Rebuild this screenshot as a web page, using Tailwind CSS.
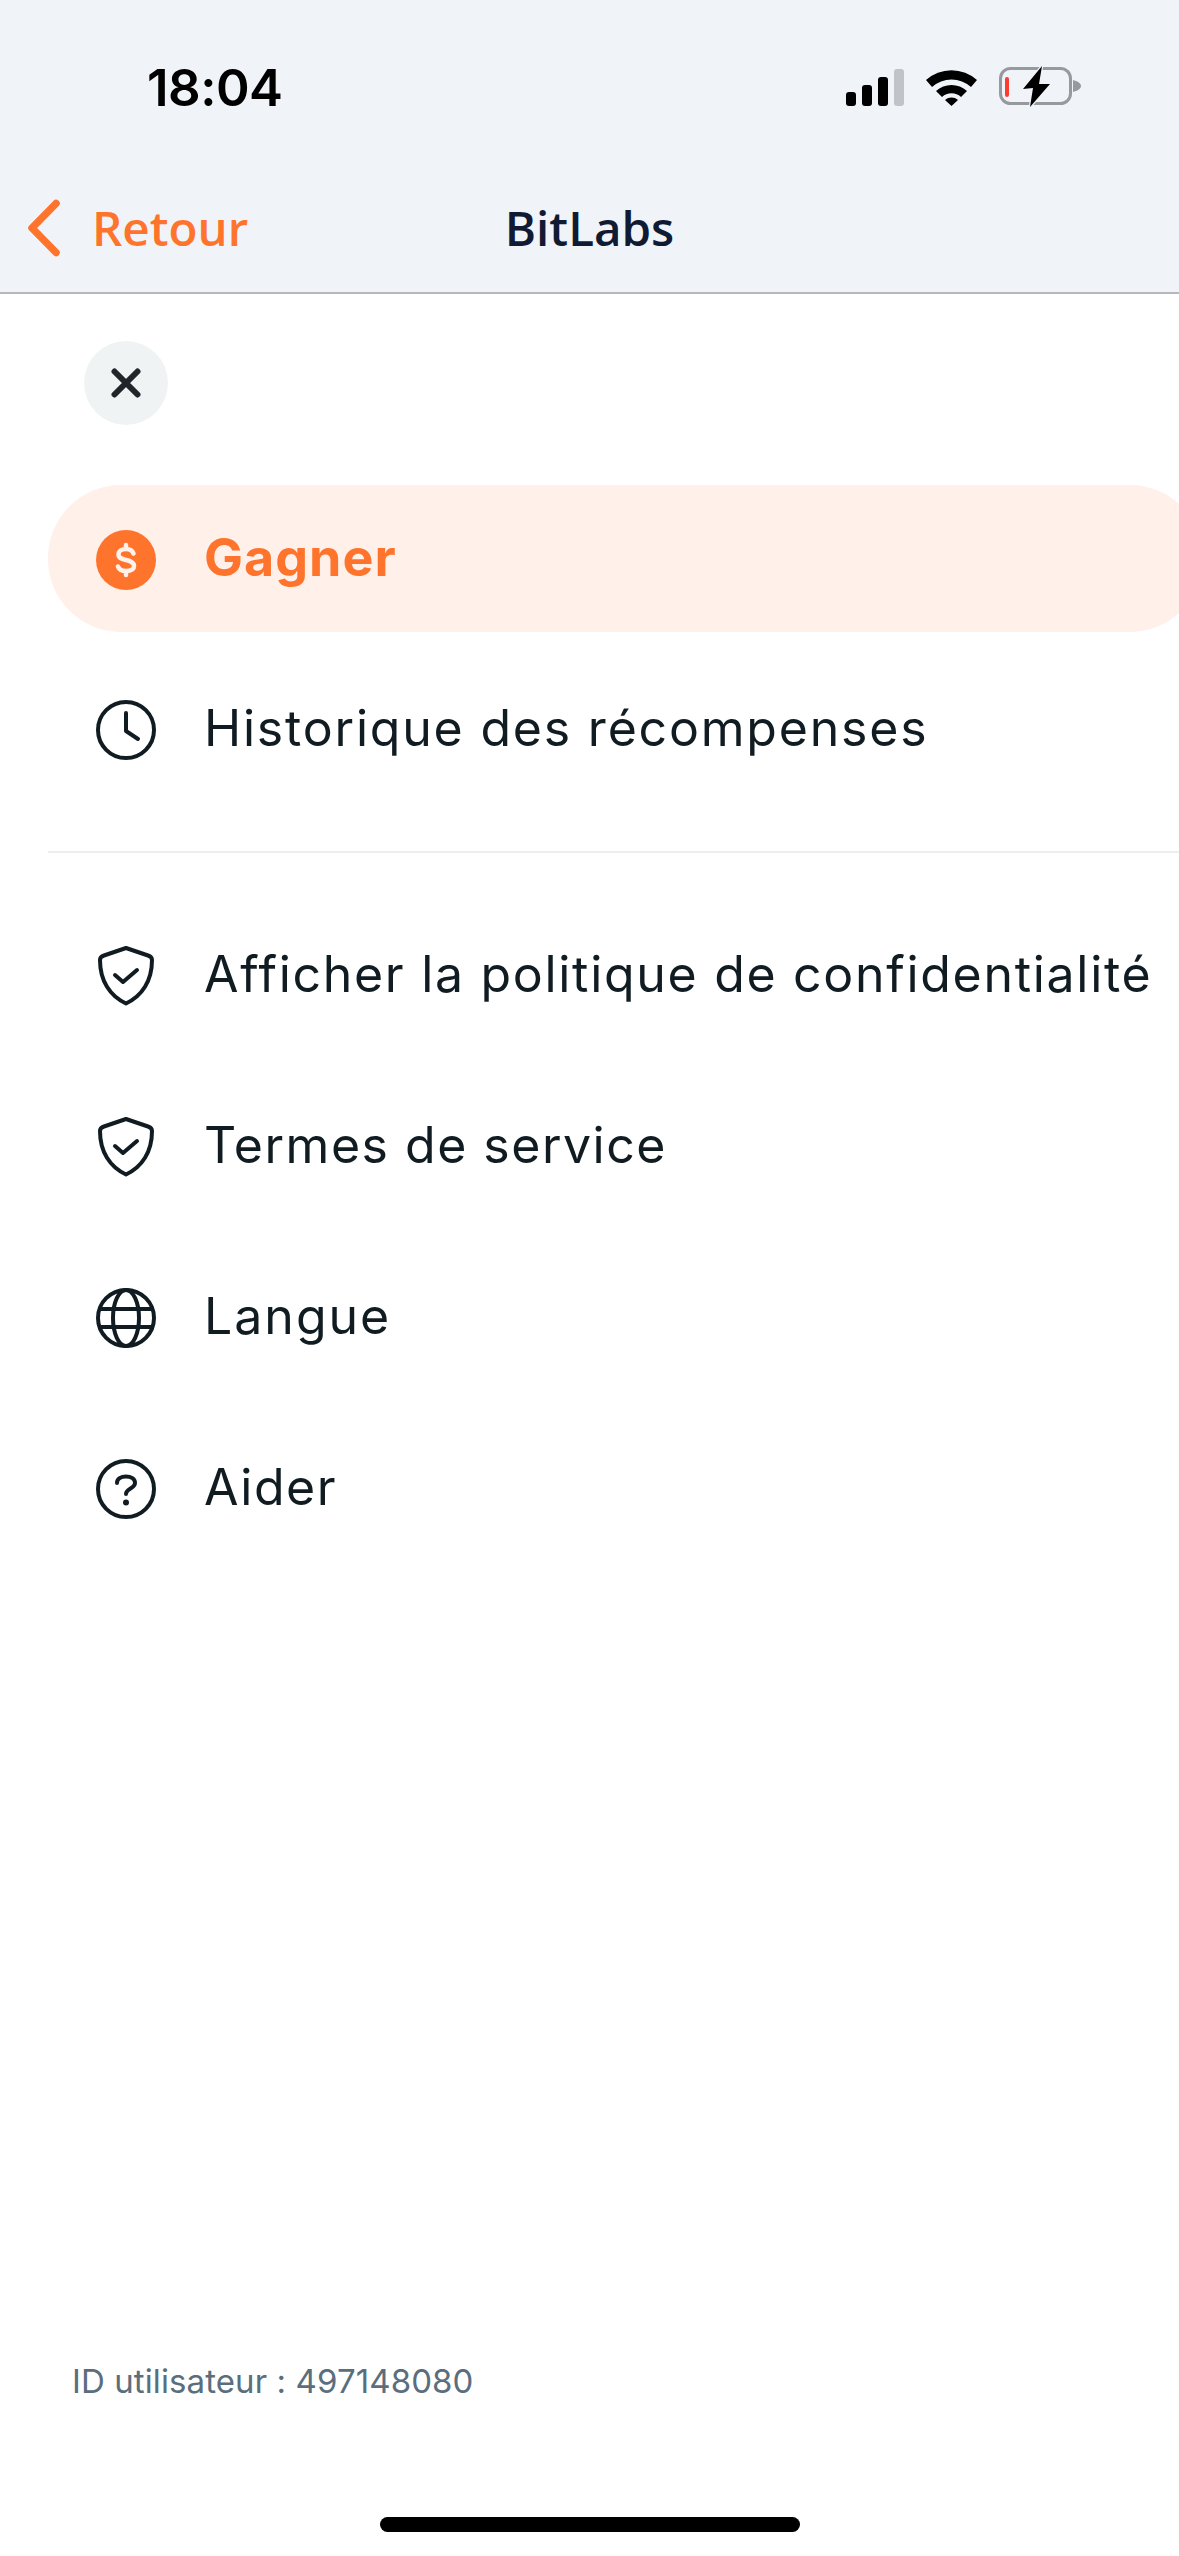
<!DOCTYPE html>
<html lang="fr">

<head>
  <meta charset="UTF-8" />
  <title>BitLabs</title>
  <meta name="viewport" content="width=device-width, initial-scale=1.0" />
  <script src="https://cdn.jsdelivr.net/npm/@tailwindcss/browser@4"></script>
</head>

<body class="bg-white font-['Inter',sans-serif]">
  <div class="relative flex flex-col w-[1179px] h-[2556px] overflow-hidden bg-white">

    <!-- status bar + nav -->
    <header class="shrink-0 h-[294px] bg-[#f0f4f9] border-b-2 border-[#b4b7bd]">
      <div class="flex items-center justify-between h-[174px] pl-[147px] pr-[98px]">
        <span class="mt-[2px] text-[51px] font-semibold text-black tracking-[-0.5px]">18:04</span>
        <div class="flex items-center gap-[22px]">
          <svg width="58" height="37" viewBox="0 0 58 37">
            <rect x="0" y="23" width="10" height="14" rx="3" fill="#000" />
            <rect x="16" y="16" width="10" height="21" rx="3" fill="#000" />
            <rect x="32" y="8" width="10" height="29" rx="3" fill="#000" />
            <rect x="48" y="0" width="10" height="37" rx="3" fill="#c0c4c8" />
          </svg>
          <svg width="51" height="37" viewBox="0 0 51 37" fill="#000">
            <path d="M0 11 A38 38 0 0 1 51 11 L45 18 A29 29 0 0 0 6 18 Z" />
            <path d="M10 22 A23 23 0 0 1 41 22 L35 28 A14 14 0 0 0 16 28 Z" />
            <path d="M19 31 A10 10 0 0 1 32 31 L25.500 37 Z" />
          </svg>
          <svg width="82" height="42" viewBox="0 0 82 42">
            <rect x="1.500" y="2.500" width="70" height="35" rx="10" fill="none" stroke="#96999d" stroke-width="3" />
            <path d="M74 14 C78 15 82 17 82 20 C82 23 78 25 74 26 Z" fill="#96999d" />
            <rect x="6" y="11" width="4" height="20" rx="2" fill="#ff3b30" />
            <path d="M43 0 L24 23 L34 22 L31 41 L51 18 L40 18 Z" fill="#000" stroke="#f0f4f9" stroke-width="2.500" paint-order="stroke" />
          </svg>
        </div>
      </div>
      <nav class="relative flex items-center justify-center h-[118px] pb-[10px]">
        <div class="absolute left-[24px] top-0 bottom-[10px] flex items-center gap-[28px]">
          <svg width="40" height="62" viewBox="0 0 40 62" fill="none" stroke="#ff742d" stroke-width="7.500" stroke-linecap="round" stroke-linejoin="round">
            <path d="M32 6.500 L8 31 L32 55.500" />
          </svg>
          <span class="font-['Open_Sans',sans-serif] text-[47.500px] font-semibold text-[#ff742d]">Retour</span>
        </div>
        <span class="font-['Open_Sans',sans-serif] text-[47.500px] font-semibold text-[#101a33]">BitLabs</span>
      </nav>
    </header>

    <main class="flex flex-col flex-1 pl-[48px] font-['Inter',sans-serif] text-[#101c22]">
      <button class="flex items-center justify-center w-[84px] h-[84px] ml-[36px] mt-[47px] rounded-full bg-[#f0f3f4]">
        <svg width="30" height="30" viewBox="0 0 30 30" fill="none" stroke="#1f2529" stroke-width="6" stroke-linecap="round">
          <path d="M3.500 3.500 L26.500 26.500 M26.500 3.500 L3.500 26.500" />
        </svg>
      </button>

      <ul class="flex flex-col gap-[24px] mt-[60px]">
        <li class="flex items-center gap-[48px] h-[147px] pl-[48px] rounded-[73px] bg-[#fff0ea] w-[1155px] text-[#ff742d] font-bold">
          <svg width="60" height="60" viewBox="0 0 60 60" class="shrink-0 mt-[3px]">
            <circle cx="30" cy="30" r="30" fill="#ff742d" />
            <path d="M37.500 23.500 C36.500 20.500 33.500 19 30 19 C26 19 22.500 21 22.500 24.500 C22.500 32 38 28 38 36 C38 39.500 34.500 41 30 41 C26 41 23 39.500 22 36.500 M30 15 L30 19 M30 41 L30 45" fill="none" stroke="#fff0ea" stroke-width="4.500" stroke-linecap="round" />
          </svg>
          <span class="text-[52px] tracking-[1px] mb-[2px]">Gagner</span>
        </li>
        <li class="flex items-center gap-[48px] h-[147px] pl-[48px]">
          <svg width="60" height="60" viewBox="0 0 60 60" fill="none" stroke="#101c22" stroke-width="4" stroke-linecap="round" stroke-linejoin="round" class="shrink-0">
            <circle cx="30" cy="30" r="28" />
            <path d="M30 13 L30 31 L42 39" />
          </svg>
          <span class="text-[50px] tracking-[1.8px] mb-[2px]">Historique des récompenses</span>
        </li>
      </ul>

      <div class="h-[2px] mt-[48px] bg-[#eceef0]"></div>

      <ul class="flex flex-col gap-[24px] mt-[49px]">
        <li class="flex items-center gap-[48px] h-[147px] pl-[48px]">
          <svg width="60" height="60" viewBox="0 0 60 60" fill="none" stroke="#101c22" stroke-width="4" stroke-linecap="round" stroke-linejoin="round" class="shrink-0">
            <path d="M30 2 L52 9.500 C55 10.500 56 11.500 56 14 C56 35 46 50 30 57.500 C14 50 4 35 4 14 C4 11.500 5 10.500 8 9.500 Z" />
            <path d="M19 29 L27 36 L41 24" />
          </svg>
          <span class="text-[50px] tracking-[1.7px] mb-[2px]">Afficher la politique de confidentialité</span>
        </li>
        <li class="flex items-center gap-[48px] h-[147px] pl-[48px]">
          <svg width="60" height="60" viewBox="0 0 60 60" fill="none" stroke="#101c22" stroke-width="4" stroke-linecap="round" stroke-linejoin="round" class="shrink-0">
            <path d="M30 2 L52 9.500 C55 10.500 56 11.500 56 14 C56 35 46 50 30 57.500 C14 50 4 35 4 14 C4 11.500 5 10.500 8 9.500 Z" />
            <path d="M19 29 L27 36 L41 24" />
          </svg>
          <span class="text-[50px] tracking-[1.5px] mb-[2px]">Termes de service</span>
        </li>
        <li class="flex items-center gap-[48px] h-[147px] pl-[48px]">
          <svg width="60" height="60" viewBox="0 0 60 60" fill="none" stroke="#101c22" stroke-width="4" stroke-linecap="round" stroke-linejoin="round" class="shrink-0">
            <circle cx="30" cy="30" r="28" />
            <ellipse cx="30" cy="30" rx="13" ry="28" />
            <path d="M5 21 L55 21 M5 39 L55 39" />
          </svg>
          <span class="text-[50px] tracking-[2px] mb-[2px]">Langue</span>
        </li>
        <li class="flex items-center gap-[48px] h-[147px] pl-[48px]">
          <svg width="60" height="60" viewBox="0 0 60 60" fill="none" stroke="#101c22" stroke-width="4" stroke-linecap="round" stroke-linejoin="round" class="shrink-0">
            <circle cx="30" cy="30" r="28" />
            <path d="M21 24 C21 20 25 17.500 30 17.500 C35 17.500 39 20 39 24 C39 29.500 30 29.500 30 35" />
            <circle cx="30" cy="43.500" r="3" fill="#101c22" stroke="none" />
          </svg>
          <span class="text-[50px] tracking-[1.5px] mb-[2px]">Aider</span>
        </li>
      </ul>

      <p class="mt-auto mb-[150px] ml-[24px] text-[33px] tracking-[0.1px] text-[#5a6e7d]">ID utilisateur : 497148080</p>
    </main>

    <!-- home indicator -->
    <div class="absolute left-[380px] top-[2517px] w-[420px] h-[15px] rounded-full bg-black"></div>
  </div>
</body>

</html>
